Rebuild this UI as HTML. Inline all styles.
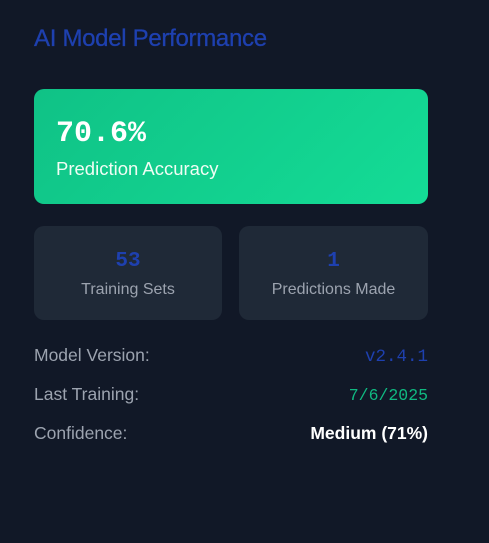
<!DOCTYPE html>
<html><head><style>
*{margin:0;padding:0;box-sizing:border-box}
html,body{width:489px;height:543px;background:#111827;overflow:hidden;font-family:"Liberation Sans",sans-serif}
h1{position:absolute;left:34px;top:25px;font-size:24px;font-weight:normal;color:#1e40af;letter-spacing:-0.3px;-webkit-text-stroke:0.3px #1e40af}
.acc{position:absolute;left:34px;top:89px;width:394px;height:115px;border-radius:10px;background:linear-gradient(135deg,#10c286,#14dc96)}
.acc .v{position:absolute;left:22px;top:28px;font-family:"Liberation Mono",monospace;font-weight:bold;font-size:30px;color:#fff}
.acc .l{position:absolute;left:22px;top:69px;font-size:18.5px;color:#f0fdf4}
.box{position:absolute;top:226px;width:188px;height:94px;border-radius:10px;background:#1f2937;text-align:center}
.box .n{margin-top:24px;font-family:"Liberation Mono",monospace;font-weight:bold;font-size:21px;color:#1e40af;line-height:24px}
.box .t{margin-top:7px;font-size:16px;color:#9ca3af}
.row{position:absolute;left:34px;width:394px;font-size:17.5px;color:#9ca3af;display:flex;justify-content:space-between;align-items:baseline}
.mono{font-family:"Liberation Mono",monospace;font-size:16.5px}
</style></head><body>
<h1>AI Model Performance</h1>
<div class="acc"><div class="v">70.6%</div><div class="l">Prediction Accuracy</div></div>
<div class="box" style="left:34px"><div class="n">53</div><div class="t">Training Sets</div></div>
<div class="box" style="left:239px;width:189px"><div class="n">1</div><div class="t">Predictions Made</div></div>
<div class="row" style="top:345px"><span>Model Version:</span><span class="mono" style="color:#1e40af;font-size:17.5px">v2.4.1</span></div>
<div class="row" style="top:384px"><span>Last Training:</span><span class="mono" style="color:#10b981">7/6/2025</span></div>
<div class="row" style="top:423px"><span>Confidence:</span><span style="color:#fff;font-weight:bold">Medium (71%)</span></div>
</body></html>
